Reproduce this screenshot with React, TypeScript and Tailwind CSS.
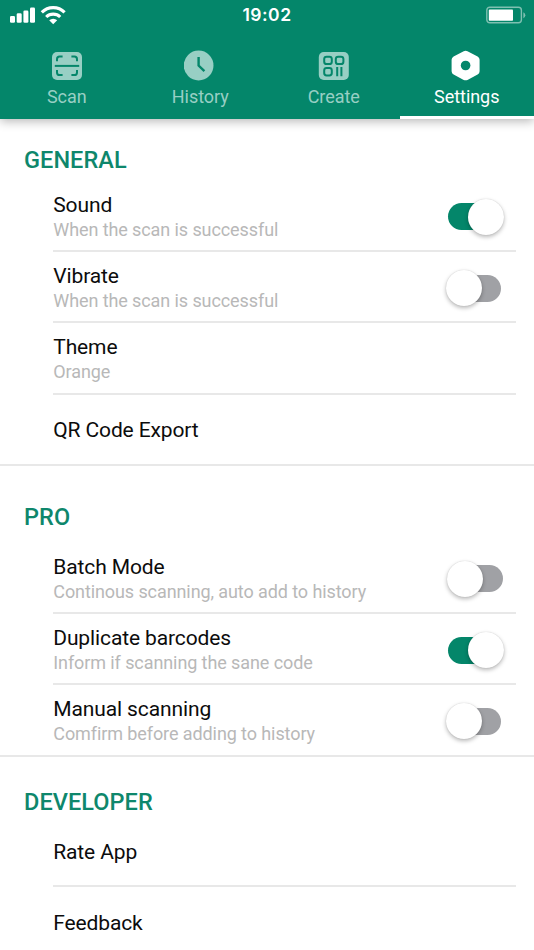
import type { ReactNode } from "react";

const font = { fontFamily: 'Roboto, "Liberation Sans", sans-serif' };

function StatusBar() {
  return (
    <div className="flex h-[30px] items-center justify-between pl-2.5 pr-[8px]">
      <div className="flex w-[120px] items-center">
        <svg width="57" height="20" viewBox="0 0 57 20" fill="#fff">
          <rect x="0" y="11" width="5" height="6.7" rx="1.3" />
          <rect x="6.7" y="8.2" width="5" height="9.5" rx="1.3" />
          <rect x="13.4" y="5.4" width="5" height="12.3" rx="1.3" />
          <rect x="20" y="2.6" width="5" height="15.1" rx="1.3" />
          <g fill="none" stroke="#fff" strokeWidth="3.1">
            <path d="M31.8 7.4A16 16 0 0 1 54.6 7.4" />
            <path d="M36.2 12A10 10 0 0 1 50.2 12" />
          </g>
          <path d="M39.2 15.3A6 6 0 0 1 47.2 15.3L43.2 19.3Z" />
        </svg>
      </div>
      <span className="-ml-[2px] font-[Inter] text-[17.5px] font-semibold leading-[30px] tracking-[0.5px] text-white">
        19:02
      </span>
      <div className="flex w-[120px] justify-end">
        <svg width="40" height="18" viewBox="0 0 40 18">
          <rect x="0.8" y="1.2" width="34.6" height="15.6" rx="3" fill="none" stroke="#7fc0b1" strokeWidth="1.4" />
          <rect x="2.8" y="3.6" width="24.2" height="11.2" rx="0.8" fill="#fff" />
          <path d="M37.4 6.2Q39.3 7 39.3 9.2T37.4 12.2Z" fill="#7fc0b1" />
        </svg>
      </div>
    </div>
  );
}

const pale = "#98cfc4";
const green = "#04866a";

const scanIcon = (
  <svg width="32" height="32" viewBox="0 0 32 32">
    <rect x="1" y="2" width="30" height="28" rx="5" fill={pale} />
    <g fill="none" stroke={green} strokeWidth="2">
      <path d="M6 11.2V9.2Q6 6.6 8.6 6.6H11.6M20.4 6.6H23.4Q26 6.6 26 9.2V11.2M6 20V22.4Q6 25 8.6 25H11.6M20.4 25H23.4Q26 25 26 22.4V20" />
      <path d="M3.8 15.9H28.2" />
    </g>
  </svg>
);

const historyIcon = (
  <svg width="32" height="32" viewBox="0 0 32 32">
    <circle cx="14.6" cy="15.5" r="14.9" fill={pale} />
    <path d="M14.6 7V15.5L20.4 21.2" fill="none" stroke={green} strokeWidth="2.4" />
  </svg>
);

const createIcon = (
  <svg width="32" height="32" viewBox="0 0 32 32">
    <rect x="0.8" y="2" width="30" height="28" rx="5" fill={pale} />
    <g fill="none" stroke={green} strokeWidth="2">
      <rect x="6.2" y="6.7" width="7.6" height="7.4" rx="2.4" />
      <rect x="17.8" y="6.7" width="7.6" height="7.4" rx="2.4" />
      <rect x="6.2" y="18" width="7.6" height="7.4" rx="2.4" />
      <path d="M19.2 17V26.2M23.4 17V26.2" />
    </g>
  </svg>
);

const settingsIcon = (
  <svg width="32" height="32" viewBox="0 0 32 32">
    <path
      d="M12.7 1.2Q14.6 .2 16.5 1.2L26.6 6.4Q28.6 7.5 28.6 9.7V21.3Q28.6 23.5 26.6 24.6L16.5 29.9Q14.6 30.8 12.7 29.9L2.6 24.6Q.6 23.5 .6 21.3V9.7Q.6 7.5 2.6 6.4Z"
      fill="#fff"
    />
    <circle cx="14.6" cy="15.5" r="4.8" fill={green} />
  </svg>
);

function Tab({ icon, label, active }: { icon: ReactNode; label: string; active?: boolean }) {
  return (
    <div
      className={
        "flex h-full flex-col items-center border-b-[3px] pt-5 text-lg leading-6 " +
        (active ? "-ml-[1px] border-white text-white" : "border-[#04866a] text-[#98cfc4]")
      }
    >
      {icon}
      <span className="mt-[3px] tracking-[-0.05px]">{label}</span>
    </div>
  );
}

function Toggle({ on, shift }: { on?: boolean; shift?: boolean }) {
  return (
    <div
      className={
        "relative mt-[22.5px] h-[27px] w-[54px] rounded-full " +
        (on ? "mr-[14.5px] bg-[#04866a]" : shift ? "mr-[13.5px] bg-[#a0a1a5]" : "mr-[15px] bg-[#a0a1a5]")
      }
    >
      <div
        className={
          "absolute -top-[4.5px] size-9 rounded-full bg-white shadow-[0_2px_4px_rgba(0,0,0,0.28),0_0_1px_rgba(0,0,0,0.2)] " +
          (on ? "left-[20.5px]" : "-left-[1.5px]")
        }
      />
    </div>
  );
}

interface RowProps {
  title: string;
  note?: string;
  control?: ReactNode;
  line?: "inset" | "full" | "none";
}

function Row({ title, note, control, line = "inset" }: RowProps) {
  return (
    <div>
      <div className="flex h-[69.25px] justify-between pl-[53.25px] pr-[18px]">
        <div className={note ? "pt-3" : "pt-[23.75px]"}>
          <div className="text-[21px] leading-[25px] tracking-[-0.12px] text-[#0c0c0c]">{title}</div>
          {note && <div className="text-lg leading-6 tracking-[-0.09px] text-[#b8b8b8]">{note}</div>}
        </div>
        {control}
      </div>
      {line !== "none" && (
        <div className={"h-[2px] bg-[#e8e8e8] " + (line === "full" ? "" : "ml-[53px] mr-[18px]")} />
      )}
    </div>
  );
}

function Heading({ children }: { children: ReactNode }) {
  return (
    <h2 className="pl-6 text-[23.5px] font-medium leading-[30px] tracking-[0.05px] text-[#0e876c]">{children}</h2>
  );
}

export default function App() {
  return (
    <div className="flex h-[950px] w-[534px] flex-col overflow-hidden bg-white" style={font}>
      <header className="h-[119px] shrink-0 bg-[#04866a] shadow-[0_2px_10px_rgba(0,0,0,0.3)]">
        <StatusBar />
        <nav className="grid h-[89px] grid-cols-4">
          <Tab icon={scanIcon} label="Scan" />
          <Tab icon={historyIcon} label="History" />
          <Tab icon={createIcon} label="Create" />
          <Tab icon={settingsIcon} label="Settings" active />
        </nav>
      </header>
      <main>
        <section className="h-[346.75px] pt-[25.5px]">
          <Heading>GENERAL</Heading>
          <div className="mt-[6.25px]">
            <Row title="Sound" note="When the scan is successful" control={<Toggle on />} />
            <Row title="Vibrate" note="When the scan is successful" control={<Toggle />} />
            <Row title="Theme" note="Orange" />
            <Row title="QR Code Export" line="full" />
          </div>
        </section>
        <section className="h-[290.75px] pt-9">
          <Heading>PRO</Heading>
          <div className="mt-[11px]">
            <Row title="Batch Mode" note="Continous scanning, auto add to history" control={<Toggle shift />} />
            <Row title="Duplicate barcodes" note="Inform if scanning the sane code" control={<Toggle on />} />
            <Row title="Manual scanning" note="Comfirm before adding to history" control={<Toggle />} line="full" />
          </div>
        </section>
        <section className="pt-[30px]">
          <Heading>DEVELOPER</Heading>
          <div className="-mt-[0.75px]">
            <Row title="Rate App" />
            <Row title="Feedback" line="none" />
          </div>
        </section>
      </main>
    </div>
  );
}
